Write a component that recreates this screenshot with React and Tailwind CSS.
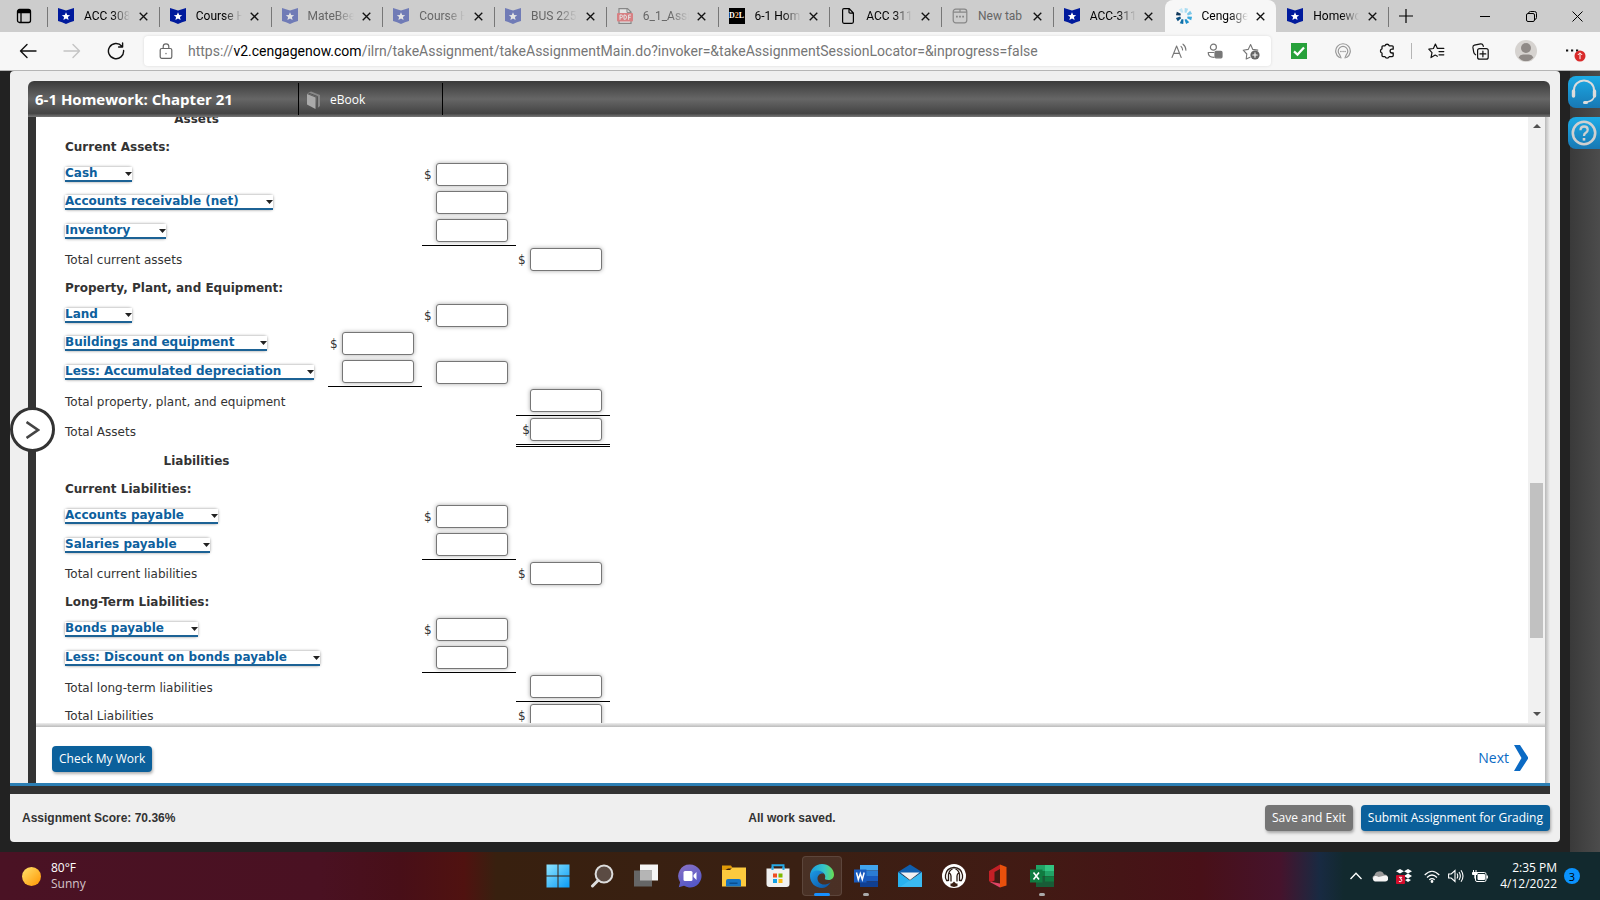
import React from "react";

const ui = "font-['Open_Sans','Noto_Sans',sans-serif]";

function Shield() {
  return (
    <svg viewBox="0 0 16 16" className="size-4">
      <path d="M0 0 L8 2.4 L16 0 V13 Q12 14 8 16 Q4 14 0 13 Z" fill="#001a9c" />
      <path d="M8 4.2 L9.2 7 12.2 7.2 9.9 9.1 10.6 12 8 10.4 5.4 12 6.1 9.1 3.8 7.2 6.8 7 Z" fill="#fff" />
    </svg>
  );
}

function Pdf() {
  return (
    <svg viewBox="0 0 16 16" className="size-4">
      <path d="M2 5V.6h8.5L14 4v1M2 13v2.4h12V13" fill="#fff" stroke="#333" strokeWidth="1.2" />
      <path d="M10 .6V4.4h4" fill="none" stroke="#333" />
      <rect x="0" y="5" width="16" height="8.6" rx="1" fill="#e5252a" />
      <path d="M3 11.8V7h1.2a1.3 1.3 0 0 1 0 2.7H3M7 7v4.3h.8q1.7 0 1.7-2.1T7.8 7zM11.6 11.8V7h2.4M11.6 9.4h2" fill="none" stroke="#fff" />
    </svg>
  );
}

function D2L() {
  return (
    <span className="flex size-4 items-center justify-center bg-black font-['Liberation_Serif',serif] text-[8px] leading-none font-bold text-white">
      D<span className="text-orange-300">2</span>L
    </span>
  );
}

function PageIcon() {
  return (
    <svg viewBox="0 0 16 16" className="size-4" fill="none" stroke="#000" strokeWidth="1.2">
      <path d="M2.6 2.2Q2.6.7 4 .7h5.2L13.4 5v8.8q0 1.5-1.4 1.5H4q-1.4 0-1.4-1.5zM9 .8V4q0 1.2 1.2 1.2h3" />
    </svg>
  );
}

function NewTabIcon() {
  return (
    <svg viewBox="0 0 16 16" className="size-4" fill="none" stroke="#333" strokeWidth="1.2">
      <rect x="1.2" y="1.2" width="13.6" height="13.6" rx="2.5" />
      <path d="M1.2 4.200H8V1.200M8 4.200h6.800" />
      <path d="M4 8.600h1.800M7.100 8.600h1.800M10.200 8.600H12" strokeWidth="1.600" />
    </svg>
  );
}

function CengageIcon() {
  const colors = ["#a8dcf2", "#7cc7e8", "#37a8dc", "#1c8fca", "#0f6fa8", "#0c4f80", "#12395c", "#c3e6f5"];
  return (
    <svg viewBox="0 0 16 16" className="size-4">
      {colors.map((c, i) => (
        <path key={c} d="M6.600 0h3.600L9.400 4.400H7.600z" fill={c} transform={"rotate(" + (i * 45 + 15) + " 8 8)"} />
      ))}
    </svg>
  );
}

const tabs = [
  { t: "ACC 308", I: Shield },
  { t: "Course H", I: Shield },
  { t: "MateBee", I: Shield, dim: true },
  { t: "Course H", I: Shield, dim: true },
  { t: "BUS 225", I: Shield, dim: true },
  { t: "6_1_Assi", I: Pdf, dim: true },
  { t: "6-1 Hom", I: D2L },
  { t: "ACC 311", I: PageIcon },
  { t: "New tab", I: NewTabIcon, dim: true, full: true },
  { t: "ACC-311", I: Shield },
  { t: "Cengage", I: CengageIcon, active: true },
  { t: "Homewo", I: Shield },
];

function Tab({ tab, line }) {
  const { I } = tab;
  return (
    <div
      className={
        "relative flex h-8 min-w-0 flex-1 items-center pl-[11px] " + (tab.active ? "rounded-t-lg bg-[#f7f7f7]" : "")
      }
    >
      {line && <span className="absolute top-[7px] left-0 h-5 w-px bg-[#777]" />}
      <span className={"shrink-0 " + (tab.dim ? "opacity-45" : "")}>
        <I />
      </span>
      <span
        className={
          "ml-[10px] w-[46px] overflow-hidden font-['Roboto','Open_Sans',sans-serif] text-xs whitespace-nowrap " +
          (tab.full ? "" : "[mask-image:linear-gradient(to_right,#000_60%,transparent)] ") +
          (tab.dim ? "text-[#666]" : "text-black")
        }
      >
        {tab.t}
      </span>
      <button aria-label={"Close " + tab.t} className="ml-[3px] flex size-5 shrink-0 items-center justify-center">
        <svg viewBox="0 0 10 10" className="size-[9px]" stroke="#111" strokeWidth="1.5">
          <path d="M.8.8 9.2 9.2M9.2.8.8 9.2" />
        </svg>
      </button>
    </div>
  );
}

function TabStrip() {
  return (
    <div className="flex h-8 shrink-0 bg-[#cdcdcd]">
      <button aria-label="Tab actions" className="flex w-[47px] shrink-0 items-center justify-center">
        <svg viewBox="0 0 16 16" className="size-4" fill="none" stroke="#000" strokeWidth="1.3">
          <rect x="1.5" y="1.5" width="13" height="13" rx="2" />
          <path d="M1.5 4.5h13M5 4.5v10" />
          <path d="M2 3h12" strokeWidth="2" />
        </svg>
      </button>
      <div className="flex min-w-0 flex-1">
        {tabs.map((tab, i) => (
          <Tab key={i} tab={tab} line={i < 10} />
        ))}
      </div>
      <button aria-label="New tab" className="relative flex w-[36px] shrink-0 items-center justify-center">
        <span className="absolute top-[7px] left-0 h-5 w-px bg-[#777]" />
        <svg viewBox="0 0 14 14" className="size-[14px]" stroke="#000" strokeWidth="1.2">
          <path d="M7 0v14M0 7h14" />
        </svg>
      </button>
      <div className="ml-[38px] flex shrink-0">
        <button aria-label="Minimize" className="flex w-[46px] items-center justify-center">
          <svg viewBox="0 0 10 10" className="size-[10px]" stroke="#000">
            <path d="M0 5.5h10" />
          </svg>
        </button>
        <button aria-label="Restore" className="flex w-[46px] items-center justify-center">
          <svg viewBox="0 0 11 11" className="size-[11px]" stroke="#000" fill="none">
            <rect x=".5" y="2.5" width="8" height="8" rx="1.5" />
            <path d="M2.5 2.2Q2.8.5 4.5.5h4q2 0 2 2v4q0 1.7-1.6 2" />
          </svg>
        </button>
        <button aria-label="Close window" className="flex w-[46px] items-center justify-center">
          <svg viewBox="0 0 11 11" className="size-[11px]" stroke="#000">
            <path d="M.5.5l10 10M10.5.5l-10 10" />
          </svg>
        </button>
      </div>
    </div>
  );
}

function BarIcon({ label, className, children }) {
  return (
    <button aria-label={label} className={"flex h-7 shrink-0 items-center justify-center " + (className || "w-11")}>
      {children}
    </button>
  );
}

function Toolbar() {
  const s = { fill: "none", stroke: "currentColor", strokeLinecap: "round", strokeLinejoin: "round" };
  return (
    <div className="flex h-[39px] shrink-0 items-center border-b border-[#b5b5b5] bg-[#f7f7f7] text-[#111]">
      <BarIcon label="Back" className="ml-[6px] w-11">
        <svg viewBox="0 0 18 16" className="h-4 w-[18px]" {...s} strokeWidth="1.4">
          <path d="M17 8H1.5M8 1.5 1.5 8 8 14.5" />
        </svg>
      </BarIcon>
      <BarIcon label="Forward" className="w-11 text-[#c4c4c4]">
        <svg viewBox="0 0 18 16" className="h-4 w-[18px]" {...s} strokeWidth="1.4">
          <path d="M1 8h15.5M10 1.5 16.5 8 10 14.5" />
        </svg>
      </BarIcon>
      <BarIcon label="Refresh">
        <svg viewBox="0 0 18 18" className="size-[18px]" {...s} strokeWidth="1.4">
          <path d="M16.6 8.5A7.6 7.6 0 1 1 14.8 4.2M15.6 1v4h-4" />
        </svg>
      </BarIcon>
      <div className="ml-[6px] flex h-[30px] min-w-0 flex-1 items-center rounded bg-white shadow-[0_0_3px_rgba(0,0,0,0.12)]">
        <svg viewBox="0 0 14 16" className="ml-[15px] h-4 w-[14px] shrink-0 text-[#666]" {...s} strokeWidth="1.2">
          <rect x="1.2" y="5.5" width="11.6" height="9.8" rx="1.6" />
          <path d="M4.2 5.5V3.6a2.8 2.8 0 0 1 5.6 0v1.9M7 10.3v.4" />
        </svg>
        <a
          href="#address"
          className="ml-[15px] min-w-0 flex-1 truncate font-['Roboto','Open_Sans',sans-serif] text-sm text-[#767676]"
        >
          https://<span className="text-black">v2.cengagenow.com</span>
          /ilrn/takeAssignment/takeAssignmentMain.do?invoker=&amp;takeAssignmentSessionLocator=&amp;inprogress=false
        </a>
        <BarIcon label="Read aloud" className="w-9 text-[#777]">
          <svg viewBox="0 0 16 16" className="size-4" {...s} strokeWidth="1.1">
            <path d="M1 14.5 5.6 3l4.6 11.5M2.6 10.4h6M10 3.4q1.6 1.4 1.6 3.6M12 1.2q2.9 2.2 2.9 6" />
          </svg>
        </BarIcon>
        <BarIcon label="Permissions" className="w-9 text-[#777]">
          <svg viewBox="0 0 16 16" className="size-4" {...s} strokeWidth="1.2">
            <circle cx="6.4" cy="4.2" r="3" />
            <path d="M7 14.4Q1.2 14.2 1.2 9.5h5.6" />
            <rect x="8" y="8.4" width="7" height="6.4" rx="1" fill="#777" />
          </svg>
        </BarIcon>
        <BarIcon label="Add to favorites" className="w-9 text-[#777]">
          <svg viewBox="0 0 18 17" className="h-[17px] w-[18px]" {...s} strokeWidth="1.1">
            <path d="M8 14.2 4.2 16l.6-5L1.2 7.2l5-.8L8.6 1.6 10.8 6.4l5 .7" />
            <circle cx="13" cy="12" r="4.6" fill="#666" stroke="none" />
            <path d="M13 9.8v4.4M10.8 12h4.4" stroke="#fff" />
          </svg>
        </BarIcon>
        <span className="w-[2px]" />
      </div>
      <BarIcon label="Checker" className="ml-[6px] w-11">
        <svg viewBox="0 0 16 16" className="size-4">
          <path d="M0 0h16v16H0z" fill="#27a13a" />
          <path d="M3 8.4 6.5 11.6 13 4.6" fill="none" stroke="#fff" strokeWidth="2.2" />
        </svg>
      </BarIcon>
      <BarIcon label="Extension" className="w-11 text-[#999]">
        <svg viewBox="0 0 16 16" className="size-4" {...s} strokeWidth="1.2">
          <path d="M4.4 14.4A7.3 7.3 0 1 1 11.6 14.4" />
          <path d="M4.6 11.6A4.8 4.8 0 1 1 11.4 11.6L10 15M4.6 11.6 6 15" />
          <path d="M5.8 8.6h.2M8 8.6h.1M10 8.6h.2" strokeWidth="1.5" />
        </svg>
      </BarIcon>
      <BarIcon label="Extensions">
        <svg viewBox="0 0 16 16" className="size-4" {...s} strokeWidth="1.3">
          <path d="M4 2.800H6a2.200 2.200 0 0 1 4.200 0h3q1 0 1 1v2.400H13a1.900 1.900 0 0 0 0 3.800h1.200v2.600q0 1-1 1h-3a2.200 2.200 0 0 1-4.200 0H4q-1 0-1-1V10a2.200 2.200 0 0 1 0-4.200V3.800q0-1 1-1z" />
        </svg>
      </BarIcon>
      <span className="ml-[2px] h-4 w-px shrink-0 bg-[#b5b5b5]" />
      <BarIcon label="Favorites" className="ml-[2px] w-11">
        <svg viewBox="0 0 17 16" className="h-4 w-[17px]" {...s} strokeWidth="1.2">
          <path d="M9.4 13.2 7.2 12 3 14.6 4 9.7.8 6.2l4.6-.7L7.4 1l2 4.4h6.4M11 8.6h4.8M11 11.8h4.8" />
        </svg>
      </BarIcon>
      <BarIcon label="Collections">
        <svg viewBox="0 0 17 17" className="size-[17px]" {...s} strokeWidth="1.2">
          <rect x="5.6" y="5.6" width="10.6" height="10.6" rx="2" />
          <path d="M10.9 8v5.8M8 10.9h5.8M3.6 11.8Q2 11 1.7 9.2L.9 4.4Q.8 2.6 2.4 2.2L8.6.9q2-.2 2.5 1.6l.2.8" />
        </svg>
      </BarIcon>
      <BarIcon label="Profile" className="w-12">
        <svg viewBox="0 0 22 22" className="size-[22px]">
          <circle cx="11" cy="11" r="11" fill="#d6d3d0" />
          <circle cx="11" cy="8" r="5" fill="#8f8a87" />
          <path d="M3.6 17.4Q5 14.6 8 14.6h6q3 0 4.4 2.8Q15.6 21 11 21T3.6 17.4" fill="#8f8a87" />
        </svg>
      </BarIcon>
      <BarIcon label="Settings and more" className="w-[50px]">
        <svg viewBox="0 0 22 22" className="size-[22px]">
          <path d="M2 10.500h2.200M7 10.500h2.200M12 10.500h2.200" stroke="#111" strokeWidth="2.200" />
          <circle cx="16" cy="16" r="5.500" fill="#d92b2b" />
          <path d="M16 19.200v-6M13.800 15 16 12.800 18.200 15" fill="none" stroke="#fff" />
        </svg>
      </BarIcon>
    </div>
  );
}

function Pick({ label, width }) {
  return (
    <div className={"relative rounded-[3px] shadow-[0_0_3px_rgba(0,0,0,0.45)] " + width}>
      <select
        aria-label={label}
        className="block h-[15px] w-full appearance-none border-b-2 border-[#1c6295] bg-white text-[12px] leading-[13px] font-bold text-[#0d609d]"
      >
        <option>{label}</option>
      </select>
      <svg viewBox="0 0 7 4" className="pointer-events-none absolute top-[5px] right-0 h-1 w-[7px]">
        <path d="M0 0h7L3.5 4z" fill="#222" />
      </svg>
    </div>
  );
}

const rows = [
  { k: "center", t: "Assets" },
  { k: "head", t: "Current Assets:" },
  { k: "pick", t: "Cash", w: "w-[67px]", c: [0, "$", 0] },
  { k: "pick", t: "Accounts receivable (net)", w: "w-[208px]", c: [0, "i", 0] },
  { k: "pick", t: "Inventory", w: "w-[101px]", c: [0, "i_", 0], h: "h-[29px]" },
  { k: "text", t: "Total current assets", c: [0, 0, "$"] },
  { k: "head", t: "Property, Plant, and Equipment:" },
  { k: "pick", t: "Land", w: "w-[67px]", c: [0, "$", 0] },
  { k: "pick", t: "Buildings and equipment", w: "w-[202px]", c: ["$", 0, 0] },
  { k: "pick", t: "Less: Accumulated depreciation", w: "w-[249px]", c: ["i_", "i", 0], h: "h-[29px]" },
  { k: "text", t: "Total property, plant, and equipment", c: [0, 0, "i_"], h: "h-[29px]" },
  { k: "text", t: "Total Assets", c: [0, 0, "$="], h: "h-[31px]" },
  { k: "center", t: "Liabilities" },
  { k: "head", t: "Current Liabilities:" },
  { k: "pick", t: "Accounts payable", w: "w-[153px]", c: [0, "$", 0] },
  { k: "pick", t: "Salaries payable", w: "w-[145px]", c: [0, "i_", 0], h: "h-[29px]" },
  { k: "text", t: "Total current liabilities", c: [0, 0, "$"] },
  { k: "head", t: "Long-Term Liabilities:" },
  { k: "pick", t: "Bonds payable", w: "w-[133px]", c: [0, "$", 0] },
  { k: "pick", t: "Less: Discount on bonds payable", w: "w-[255px]", c: [0, "i_", 0], h: "h-[29px]" },
  { k: "text", t: "Total long-term liabilities", c: [0, 0, "i_"], h: "h-[29px]" },
  { k: "text", t: "Total Liabilities", c: [0, 0, "$"] },
];

function Amount({ kind, label }) {
  const border = kind.includes("_")
    ? "border-b border-black"
    : kind.includes("=")
      ? "border-b-3 border-double border-black"
      : "";
  return (
    <td className={"p-0 align-middle " + border}>
      <div className="flex h-6 items-start">
        <span className={"w-[14px] pt-1 text-[12px] leading-4 " + (kind === "$=" ? "text-right" : "pl-[2px]")}>
          {kind.startsWith("$") ? "$" : ""}
        </span>
        <input
          aria-label={label}
          className="h-[23px] w-[72px] rounded-[3px] border border-[#767676] bg-white px-1 text-right text-[12px] shadow-[0_0_4px_rgba(0,0,0,0.35)]"
        />
      </div>
    </td>
  );
}

function Sheet() {
  return (
    <table className="-mt-3 ml-[29px] w-[545px] table-fixed border-separate border-spacing-0 font-['DejaVu_Sans',Verdana,sans-serif] text-[12px] leading-4 text-[#333]">
      <colgroup>
        <col className="w-[263px]" />
        <col className="w-[94px]" />
        <col className="w-[94px]" />
        <col className="w-[94px]" />
      </colgroup>
      <tbody>
        {rows.map((r) => (
          <tr key={r.t} className={r.h || "h-7"}>
            {r.k === "pick" ? (
              <th scope="row" className="p-0 pb-px align-middle">
                <Pick label={r.t} width={r.w} />
              </th>
            ) : (
              <th
                scope="row"
                className={
                  "p-0 align-middle whitespace-nowrap " +
                  (r.k === "center" ? "text-center font-bold" : r.k === "head" ? "pb-px text-left font-bold" : "text-left font-normal")
                }
              >
                {r.t}
              </th>
            )}
            {(r.c || [0, 0, 0]).map((c, i) =>
              c ? <Amount key={i} kind={c} label={r.t + " amount"} /> : <td key={i} className="p-0" />
            )}
          </tr>
        ))}
      </tbody>
    </table>
  );
}

function ScrollRail() {
  return (
    <div className="flex w-[17px] shrink-0 flex-col items-center justify-between bg-[#f1f1f1] py-[7px]">
      <svg viewBox="0 0 8 4" className="h-1 w-2">
        <path d="M0 4h8L4 0z" fill="#505050" />
      </svg>
      <div className="flex w-[13px] flex-1 flex-col pb-[74px]">
        <div className="flex-1" />
        <div className="h-[155px] bg-[#c1c1c1]" />
      </div>
      <svg viewBox="0 0 8 4" className="h-1 w-2">
        <path d="M0 0h8L4 4z" fill="#505050" />
      </svg>
    </div>
  );
}

function Assignment() {
  return (
    <main className="relative flex min-h-0 min-w-0 flex-1 flex-col rounded bg-[#efefef] pt-[10px]">
      <div className="mr-[10px] ml-[18px] flex h-9 shrink-0 items-center rounded-t-md bg-[linear-gradient(to_bottom,#3a3a3a,#666_50%,#444_90%,#777)] text-white">
        <h1 className="flex h-8 w-[270px] items-center pl-[7px] text-[15px] font-bold whitespace-nowrap">
          6-1 Homework: Chapter 21
        </h1>
        <a href="#ebook" className="flex h-8 w-[145px] items-center gap-[9px] border-x border-black pt-px pl-2 text-xs font-medium">
          <svg viewBox="0 0 14 18" className="h-[18px] w-[14px]">
            <path d="M0 3 8.5 6.5V18L0 13.5z" fill="#aaa" />
            <path d="M0 2.2 4 .5 13 4v11l-2.5 2V6z" fill="#888" />
            <path d="M1.5 2 10.5 5.5V17" fill="none" stroke="#555" />
          </svg>
          eBook
        </a>
      </div>
      <div className="mr-[10px] ml-[18px] flex min-h-0 flex-1 border-l-8 border-[#333]">
        <div className="flex min-w-0 flex-1 flex-col bg-white">
          <div className="flex min-h-0 flex-1">
            <div className="min-w-0 flex-1 overflow-hidden">
              <Sheet />
            </div>
            <ScrollRail />
          </div>
          <div className="h-1 shrink-0 bg-[linear-gradient(to_bottom,#eee,#bbb)]" />
          <div className="flex h-14 shrink-0 items-center justify-between pr-[17px] pl-4">
            <button className="mt-2 h-[26px] rounded bg-[#0b609b] px-[7px] text-xs font-medium whitespace-nowrap text-white shadow-[1px_2px_3px_rgba(0,0,0,0.3)]">
              Check My Work
            </button>
            <a href="#next" className="mt-[6px] flex items-center gap-[5px] text-sm text-[#0b6ac4]">
              Next
              <svg viewBox="0 0 14 26" className="h-[26px] w-[14px]">
                <path d="M0 0h6l8.5 13L6 26H0l7.5-13z" fill="#0b6ac4" />
              </svg>
            </a>
          </div>
        </div>
        <div className="w-[5px] shrink-0 bg-[linear-gradient(to_right,#b8b8b8,#efefef)]" />
      </div>
      <div className="mr-[10px] h-[3px] shrink-0 bg-[#2c7fb4]" />
      <div className="mr-[10px] h-2 shrink-0 bg-[#333]" />
      <div className="grid h-12 shrink-0 grid-cols-[1fr_auto_1fr] items-center pr-[10px] pl-3 text-[#333]">
        <span className="pb-px font-['Liberation_Sans',Arial,sans-serif] text-xs font-bold">Assignment Score: 70.36%</span>
        <span className="pb-px pl-3 font-['Liberation_Sans',Arial,sans-serif] text-xs font-bold">All work saved.</span>
        <div className="flex justify-end gap-2 text-xs whitespace-nowrap text-white">
          <button className="h-[26px] rounded bg-[#757575] px-[7px] shadow-[1px_2px_3px_rgba(0,0,0,0.3)]">Save and Exit</button>
          <button className="h-[26px] rounded bg-[#0b609b] px-[7px] shadow-[1px_2px_3px_rgba(0,0,0,0.3)]">
            Submit Assignment for Grading
          </button>
        </div>
      </div>
      <button
        aria-label="Expand panel"
        className="absolute top-[336px] left-0 flex size-[45px] items-center justify-center rounded-full border-3 border-[#333] bg-white"
      >
        <svg viewBox="0 0 14 18" className="h-[18px] w-[14px]" fill="none" stroke="#444" strokeWidth="2.6">
          <path d="M.5 1 12 9 .5 17" />
        </svg>
      </button>
    </main>
  );
}

function HelpTabs() {
  const cls = "flex size-8 items-center justify-center rounded-l-lg bg-[linear-gradient(to_bottom,#1cabe6,#1878b4)]";
  return (
    <aside className="flex w-10 shrink-0 flex-col items-end gap-[9px] bg-[linear-gradient(to_right,#222_10px,#3a3a3a_10px,#4c4c4c)] pt-[5px]">
      <button aria-label="Support" className={cls}>
        <svg viewBox="0 0 26 26" className="size-[26px]" fill="none" stroke="#dcdcdc" strokeLinecap="round">
          <path d="M3 14V11a10 9.5 0 0 1 20 0v3" strokeWidth="2" />
          <path d="M2.5 12v5M23.5 12v5" strokeWidth="3.4" />
          <path d="M23 18q-1 4-7 5" strokeWidth="1.5" />
          <path d="M13.5 23.5h2" strokeWidth="3" />
        </svg>
      </button>
      <button aria-label="Help" className={cls}>
        <svg viewBox="0 0 26 26" className="size-[26px]" fill="none" stroke="#d0d0d0">
          <circle cx="13" cy="13" r="11.2" strokeWidth="2.6" />
          <path d="M9.5 10.3q0-3.800 3.600-3.800t3.600 3.200q0 1.900-1.900 3.100T13 16" strokeWidth="2.3" />
          <path d="M13 18v2.6" strokeWidth="2.6" />
        </svg>
      </button>
    </aside>
  );
}

const apps = [
  ["Start", <svg viewBox="0 0 24 24" className="size-6"><defs><linearGradient id="wn" x2="1" y2="1"><stop stopColor="#8ee4ff" /><stop offset="1" stopColor="#0a9bf5" /></linearGradient></defs><path d="M.5.5h11v11H.5zM12.5.5h11v11h-11zM.5 12.5h11v11H.5zM12.5 12.5h11v11h-11z" fill="url(#wn)" /></svg>],
  ["Search", <svg viewBox="0 0 24 24" className="size-6" fill="none" stroke="#ddd"><circle cx="14" cy="10" r="8.4" fill="#5b4b43" strokeWidth="2" /><path d="M8 16.5 2.5 22" strokeWidth="3" strokeLinecap="round" /></svg>],
  ["Task view", <svg viewBox="0 0 24 24" className="size-6"><path d="M6 .5h18v16H6z" fill="#f5f5f5" /><path d="M0 6.5h18v16H0z" fill="#666" /><path d="M6 6.5h12v10H6z" fill="#b5b5b5" /></svg>],
  ["Chat", <svg viewBox="0 0 24 24" className="size-6"><defs><linearGradient id="ch" y2="1" x2=".4"><stop stopColor="#8a72c4" /><stop offset="1" stopColor="#5558c8" /></linearGradient></defs><path d="M12 .5a11.5 11.5 0 1 1-6 21.3L.8 23.3l1.300-5A11.5 11.5 0 0 1 12 .5z" fill="url(#ch)" /><rect x="5.500" y="7" width="9" height="10" rx="1.500" fill="#fff" /><path d="M15.500 11 18.500 8v8l-3-3z" fill="#fff" /></svg>],
  ["File Explorer", <svg viewBox="0 0 24 24" className="size-6"><path d="M0 1.500h9l2 3h-5L0 8z" fill="#e09a08" /><path d="M0 22.500V6h8l2.500-2.500H24v19z" fill="#fcca3e" /><path d="M4 22.500V17q0-2 2-2h11q2 0 2 2v5.500z" fill="#1673c2" /><path d="M7.500 18.500h8v1.500h-8z" fill="#0b4f8f" /></svg>],
  ["Store", <svg viewBox="0 0 24 24" className="size-6"><path d="M6.500 6V1.200h11V6" fill="none" stroke="#27a9e6" strokeWidth="2" /><path d="M.5 4.500h23V20q0 3-3 3h-17q-3 0-3-3z" fill="#f0f0f0" /><path d="M7 9.500h4v4H7z" fill="#f04e23" /><path d="M12.500 9.500h4v4h-4z" fill="#7eb900" /><path d="M7 15h4v4H7z" fill="#10a2e8" /><path d="M12.500 15h4v4h-4z" fill="#fdb913" /><path d="M6.500 6V3M17.500 6V3" stroke="#27a9e6" strokeWidth="2" /></svg>],
  ["Edge", <svg viewBox="0 0 24 24" className="size-6"><defs><linearGradient id="e1" x2="1"><stop stopColor="#1a9be0" /><stop offset=".6" stopColor="#35c5c8" /><stop offset="1" stopColor="#68dd4f" /></linearGradient><linearGradient id="e2" y2="1"><stop stopColor="#1c9be6" /><stop offset="1" stopColor="#0b4fa0" /></linearGradient></defs><path d="M0 12C0 5 5.500 0 12 0s12 5 12 10.500c0 4-3 5.500-5.500 5.500-3 0-4-1-3.500-2 1-2-.5-6-5-6S.5 10 0 12z" fill="url(#e1)" /><path d="M0 12c0-3 3-5.500 7.500-5.500 3 0 5.500 1.500 6.500 3.500-3-1.500-6.500 1-6.500 4.500 0 5 6 8.500 13 4C18 22.500 15 24 12 24 5.500 24 0 19 0 12z" fill="url(#e2)" /></svg>, "bg-white/8 border border-white/10", "w-4 bg-[#1890ff]"],
  ["Word", <svg viewBox="0 0 24 24" className="size-6"><path d="M6 1h18v5.500H6z" fill="#41a5ee" /><path d="M6 6.500h18V12H6z" fill="#2b7cd3" /><path d="M6 12h18v5.500H6z" fill="#185abd" /><path d="M6 17.500h18V23H6z" fill="#103f91" /><path d="M0 5.500h12.500v13H0z" fill="#185abd" /><path d="M2.500 8.500 4.300 15.500 6.300 9.500 8.300 15.500 10.200 8.500" fill="none" stroke="#fff" strokeWidth="1.500" /></svg>, "", "w-[6px] bg-[#aaa]"],
  ["Mail", <svg viewBox="0 0 24 24" className="size-6"><path d="M0 8 12 .5 24 8 12 15z" fill="#0f5fae" /><path d="M0 8 12 16.500 24 8v15H0z" fill="#29b1ee" /><path d="M2.500 8.500h19L12 16z" fill="#f2f2f2" /><path d="M24 8v15H2z" fill="#58c8f5" opacity=".4" /></svg>],
  ["Reader", <svg viewBox="0 0 24 24" className="size-6"><circle cx="12" cy="12" r="12" fill="#fff" /><path d="M9 17.500V12a3 4 0 0 0-1.500-3M15 17.500V12a3 4 0 0 1 1.500-3M6.500 17V10.500Q7 6.500 10.500 5M17.500 17v-6.500Q17 6.500 13.500 5M6.500 16.500H4.600Q3 14 3.500 11 4.500 4 12 3.500 19.500 4 20.500 11q.5 3-1.100 5.500h-1.900" fill="none" stroke="#2b1a14" strokeWidth="1.300" /><path d="M8.500 19.500h1.500L12 17.500l2 2h1.500V22l-3.500 1-3.500-1z" fill="#3a1f14" /></svg>],
  ["Office", <svg viewBox="0 0 24 24" className="size-6"><path d="M3 7 14 .5V5L8.500 8v8.500L5.500 18 3 17z" fill="#c32026" /><path d="M14 .5 20.500 3v18.500L14 23.500z" fill="#e8500c" /><path d="M3 17.500 14 19.500v4z" fill="#e04465" /></svg>],
  ["Excel", <svg viewBox="0 0 24 24" className="size-6"><path d="M6 1h9v6H6z" fill="#21a366" /><path d="M15 1h9v6h-9z" fill="#33c481" /><path d="M6 7h9v5.500H6z" fill="#107c41" /><path d="M15 7h9v5.500h-9z" fill="#21a366" /><path d="M6 12.500h18V23H6z" fill="#185c37" /><path d="M15 12.500h9v5h-9z" fill="#107c41" /><path d="M0 5.500h12.500v13H0z" fill="#107c41" /><path d="M3.500 8.500l5.500 7M9 8.500l-5.500 7" stroke="#fff" strokeWidth="1.600" /></svg>, "", "w-[6px] bg-[#aaa]"],
];

function Taskbar() {
  return (
    <footer className="grid h-12 shrink-0 grid-cols-[1fr_auto_1fr] items-center bg-[linear-gradient(to_right,#4a1224,#4a1122_20%,#480f18_25%,#501210_29%,#38200f_31%,#3a2013_50%,#421a14_65%,#481018_75%,#46132c_80%,#182a42_82.5%,#12292e_84%,#12292e)] text-xs text-white">
      <div className="flex items-center pl-[22px]">
        <span className="size-[19px] rounded-full bg-[linear-gradient(135deg,#ffe36e,#ff9500)]" />
        <div className="ml-[10px] leading-4">
          <div>80°F</div>
          <div className="text-[#d5c5ca]">Sunny</div>
        </div>
      </div>
      <nav className="flex">
        {apps.map(([name, icon, hl, mark]) => (
          <div key={name} className="relative flex h-12 w-11 items-center justify-center">
            <button aria-label={name} className={"flex size-10 items-center justify-center rounded " + (hl || "")}>
              {icon}
            </button>
            {mark && <span className={"absolute bottom-1 h-[3px] rounded-full " + mark} />}
          </div>
        ))}
      </nav>
      <div className="flex items-center justify-end pr-5">
        <svg viewBox="0 0 12 8" className="mr-[10px] h-2 w-3" fill="none" stroke="#fff" strokeWidth="1.3">
          <path d="M.5 7 6 1.2 11.5 7" />
        </svg>
        <svg viewBox="0 0 16 12" className="mr-2 h-3 w-4">
          <path d="M3 11a3 3 0 0 1-.5-5.800A5 5 0 0 1 12 4.500a3.200 3.200 0 0 1 1 6.500z" fill="#999" />
          <path d="M2.800 11.500a3 3 0 0 1 0-5.500q2-.5 3.800 1L13 5.500a3 3 0 0 1 .3 6z" fill="#f4f4f4" />
        </svg>
        <svg viewBox="0 0 16 16" className="mr-3 size-4">
          <path d="M0 3.200 4 1l4 2.200L12 1l4 2.200-4 2.300-4-2.300-4 2.300zM8 8l4-2.500L16 8l-4 2.400zM9 12l3-1.500 3 1.500-3 2z" fill="#fff" />
          <rect y="7" width="9" height="9" rx="1" fill="#d40d2c" />
          <path d="M3 9.300h2.800L4.400 11q1.800 0 1.500 1.600-.6 1.600-3 .8" fill="none" stroke="#fff" />
        </svg>
        <svg viewBox="0 0 16 13" className="mr-2 h-[13px] w-4" fill="none" stroke="#fff" strokeWidth="1.2">
          <path d="M.7 5Q8-2.500 15.300 5M3 7.500Q8 2.500 13 7.500M5.300 9.800Q8 7.300 10.700 9.800" />
          <circle cx="8" cy="11.5" r=".8" fill="#fff" />
        </svg>
        <svg viewBox="0 0 16 14" className="mr-2 h-[14px] w-4" fill="none" stroke="#fff" strokeWidth="1.1">
          <path d="M.6 5h2.600L7 1.500v11L3.200 9H.6zM9 4.500q1.500 2.500 0 5M11 3q2.700 4 0 8M13 1.200q4 5.800 0 11.600" />
        </svg>
        <svg viewBox="0 0 16 13" className="h-[13px] w-4" fill="none" stroke="#fff">
          <rect x="3.5" y="2.5" width="10.5" height="9" rx="1.5" />
          <path d="M6 4.500h6.500v5H6z" fill="#fff" />
          <path d="M15.200 5.500v3" strokeWidth="1.5" />
          <path d="M1.500 0v2.500M4 0v2.500M2.800 5v3.500" />
          <path d="M.5 2.500h4.600v2H.5z" fill="#fff" />
        </svg>
        <div className="ml-3 text-right leading-4">
          <div>2:35 PM</div>
          <div>4/12/2022</div>
        </div>
        <span className="ml-[7px] flex size-4 items-center justify-center rounded-full bg-[#0a93ff] text-[11px] leading-none text-black">
          3
        </span>
      </div>
    </footer>
  );
}

export default function App() {
  return (
    <div className={"flex h-screen flex-col overflow-hidden bg-[#222] " + ui}>
      <TabStrip />
      <Toolbar />
      <div className="flex min-h-0 flex-1">
        <div className="flex min-w-0 flex-1 pb-[10px] pl-[10px]">
          <Assignment />
        </div>
        <HelpTabs />
      </div>
      <Taskbar />
    </div>
  );
}
